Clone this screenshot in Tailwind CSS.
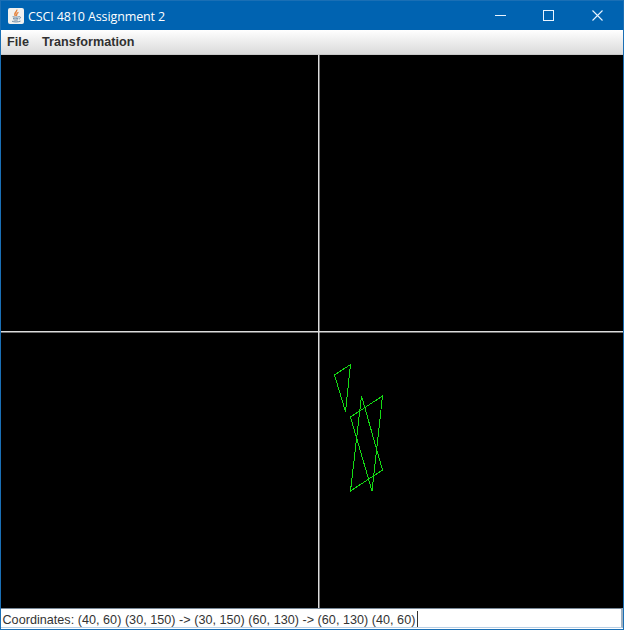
<!DOCTYPE html>
<html lang="en">
<head>
<meta charset="utf-8">
<title>CSCI 4810 Assignment 2</title>
<script src="https://cdn.jsdelivr.net/npm/@tailwindcss/browser@4"></script>
</head>
<body class="h-[630px] w-[624px] overflow-hidden">
<div class="flex h-[630px] w-[624px] flex-col border border-[#1a6fb5] bg-white">
  <header class="flex h-[29px] shrink-0 items-center bg-[#0063b1] pl-[7px] text-white">
    <svg class="size-4 shrink-0" viewBox="0 0 16 16" fill="none">
      <rect width="16" height="16" rx="2" fill="#f1f1ef"/>
      <path d="M8.7 1.6C9.7 3.8 5 4.6 7.4 8M10.5 4.3C7.8 5.2 9.3 6.3 8.3 8" stroke="#e5823c" stroke-width="1.4"/>
      <path d="M4.6 8.7c1.8.6 4.5.6 6.3 0M5 10.3c1.6.6 3.8.6 5.4 0M5.5 11.8c1.4.5 3 .5 4.4 0M11 8.8c2.4-.5 1.7 1.9-.2 2.3M4 13.2c2 1 6 1 8.5-.1" stroke="#6d8ba5" stroke-width="1"/>
    </svg>
    <h1 class="ml-1 mt-[3px] text-[12.5px] leading-none whitespace-nowrap font-['Open_Sans',sans-serif] tracking-[-0.12px]">CSCI 4810 Assignment 2</h1>
    <div class="ml-auto flex h-full items-center pr-px">
      <svg class="h-[29px] w-[48px]" viewBox="0 0 48 29"><path d="M19 14.5h11" stroke="#e9f4ff"/></svg>
      <svg class="h-[29px] w-[48px]" viewBox="0 0 48 29"><rect x="19.5" y="9.5" width="10" height="10" fill="none" stroke="#e9f4ff"/></svg>
      <svg class="h-[29px] w-[50px]" viewBox="0 0 50 29"><path d="M20.5 9.5l10 10M30.5 9.5l-10 10" stroke="#e9f4ff" stroke-width="1.1"/></svg>
    </div>
  </header>
  <nav class="flex h-[25px] shrink-0 items-center gap-[13px] border-b border-[#c8c8c8] bg-linear-to-b from-white to-[#dadada] pl-[6px] font-['Liberation_Sans',Arial,sans-serif] text-[12.6px] leading-none font-bold tracking-[0.07px] text-[#303030]">
    <span class="mt-px">File</span>
    <span class="mt-px">Transformation</span>
  </nav>
  <svg class="h-[553px] w-[622px] shrink-0 bg-black" viewBox="1 55 622 553" fill="none">
    <path d="M318.75 55v553M1 331.75h622" stroke="#dcdcdc" stroke-width="1.5"/>
    <g stroke="#14dc14" stroke-width="1" shape-rendering="crispEdges">
      <path d="M350.5 364.5L334.5 375L345.5 411.5Z"/>
      <path d="M382.5 396L350.5 417L372 491Z"/>
      <path d="M361.5 396L350.5 491L382.5 470Z"/>
    </g>
  </svg>
  <footer class="flex h-5 shrink-0 items-center border-t border-r-2 border-b border-t-[#7a8a99] border-r-[#9fb0c0] border-b-[#b8cfe5] bg-white pl-[1.5px] font-['Liberation_Sans',Arial,sans-serif] text-[12.6px] leading-none whitespace-nowrap text-[#333]">
    <span class="mt-[5px] tracking-[0.026px]">Coordinates: (40, 60) (30, 150) -&gt; (30, 150) (60, 130) -&gt; (60, 130) (40, 60)</span>
    <i class="ml-[2px] mt-px h-4 w-px bg-[#333]"></i>
  </footer>
</div>
</body>
</html>
